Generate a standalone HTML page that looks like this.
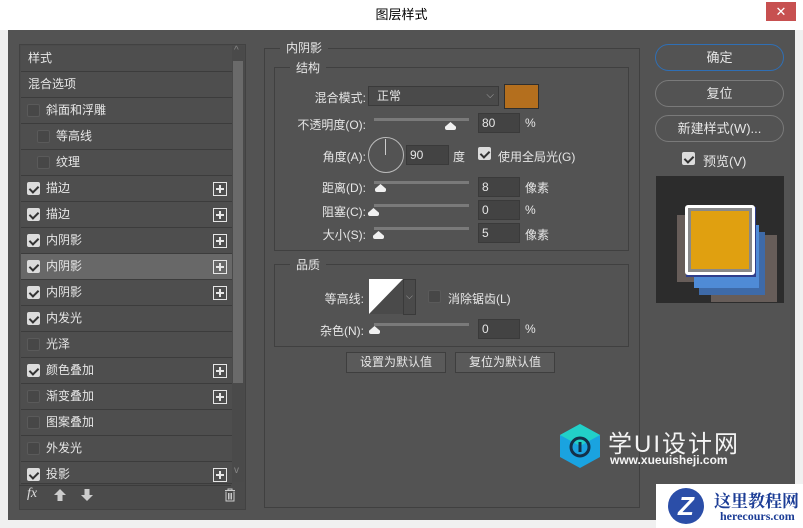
<!DOCTYPE html>
<html><head><meta charset="utf-8"><style>
*{margin:0;padding:0;box-sizing:border-box}
body{width:803px;height:528px;background:#f0f0f0;position:relative;overflow:hidden;font-family:"Liberation Sans","Noto Sans CJK SC",sans-serif;font-size:12px;color:#e6e6e6}
.a{position:absolute}
.title{left:0;top:0;width:803px;height:30px;background:#fff;color:#000;font-size:13px;text-align:center;line-height:30px}
.close{left:766px;top:2px;width:30px;height:19px;background:#c75050;color:#fff;text-align:center;line-height:19px;font-size:13px}
.body{left:8px;top:30px;width:787px;height:490px;background:#535353}
.list{left:19px;top:44px;width:227px;height:466px;border:1px solid #424242;background:#4b4b4b}
.row{position:absolute;left:1px;width:211px;height:26px;border-bottom:1px solid #3c3c3c;background:#4e4e4e;line-height:25px}
.row.sel{background:#686868}
.cb{position:absolute;top:6px;width:13px;height:13px;border:1px solid #5a5a5a;background:#474747;border-radius:2px}
.cb.on{background:#dcdcdc;border-color:#dcdcdc}
.cb.on:after{content:"";position:absolute;left:3px;top:1px;width:4px;height:7px;border:solid #333;border-width:0 2px 2px 0;transform:rotate(45deg)}
.plus{position:absolute;left:192px;top:6px;width:14px;height:14px;border:1px solid #e6e6e6}
.plus:before{content:"";position:absolute;left:2px;top:5px;width:8px;height:2px;background:#e6e6e6}
.plus:after{content:"";position:absolute;left:5px;top:2px;width:2px;height:8px;background:#e6e6e6}
.fs{border:1px solid #404040}
.lg{background:#535353;padding:0 6px}
.inp{position:absolute;height:20px;background:#434343;border:1px solid #3a3a3a;line-height:18px;padding-left:3px}
.sl{position:absolute;height:3px;background:#7a7a7a}
.th{position:absolute;width:11px;height:8px;background:#f0f0f0;clip-path:polygon(50% 0,100% 60%,100% 100%,0 100%,0 60%);border-radius:0 0 2px 2px}
.lbl{position:absolute;text-align:right}
.btn{position:absolute;left:655px;width:129px;height:27px;border:1px solid #7a7a7a;border-radius:14px;text-align:center;line-height:25px;font-size:13px}
.dbtn{position:absolute;top:352px;height:21px;border:1px solid #3e3e3e;background:#5a5a5a;text-align:center;line-height:19px}
</style></head><body>
<div class="a title">图层样式</div>
<div class="a close">✕</div>
<div class="a body"></div>
<div class="a list">
 <div class="row" style="top:1px;padding-left:7px">样式</div>
 <div class="row" style="top:27px;padding-left:7px">混合选项</div>
 <div class="row" style="top:53px"><span class="cb" style="left:6px"></span><span class="a" style="left:25px">斜面和浮雕</span></div>
 <div class="row" style="top:79px"><span class="cb" style="left:16px"></span><span class="a" style="left:35px">等高线</span></div>
 <div class="row" style="top:105px"><span class="cb" style="left:16px"></span><span class="a" style="left:35px">纹理</span></div>
 <div class="row" style="top:131px"><span class="cb on" style="left:6px"></span><span class="a" style="left:25px">描边</span><span class="plus"></span></div>
 <div class="row" style="top:157px"><span class="cb on" style="left:6px"></span><span class="a" style="left:25px">描边</span><span class="plus"></span></div>
 <div class="row" style="top:183px"><span class="cb on" style="left:6px"></span><span class="a" style="left:25px">内阴影</span><span class="plus"></span></div>
 <div class="row sel" style="top:209px"><span class="cb on" style="left:6px"></span><span class="a" style="left:25px">内阴影</span><span class="plus"></span></div>
 <div class="row" style="top:235px"><span class="cb on" style="left:6px"></span><span class="a" style="left:25px">内阴影</span><span class="plus"></span></div>
 <div class="row" style="top:261px"><span class="cb on" style="left:6px"></span><span class="a" style="left:25px">内发光</span></div>
 <div class="row" style="top:287px"><span class="cb" style="left:6px"></span><span class="a" style="left:25px">光泽</span></div>
 <div class="row" style="top:313px"><span class="cb on" style="left:6px"></span><span class="a" style="left:25px">颜色叠加</span><span class="plus"></span></div>
 <div class="row" style="top:339px"><span class="cb" style="left:6px"></span><span class="a" style="left:25px">渐变叠加</span><span class="plus"></span></div>
 <div class="row" style="top:365px"><span class="cb" style="left:6px"></span><span class="a" style="left:25px">图案叠加</span></div>
 <div class="row" style="top:391px"><span class="cb" style="left:6px"></span><span class="a" style="left:25px">外发光</span></div>
 <div class="row" style="top:417px;height:22px"><span class="cb on" style="left:6px"></span><span class="a" style="left:25px">投影</span><span class="plus"></span></div>
 <div class="a" style="left:212px;top:1px;width:12px;height:436px;background:#4a4a4a"></div>
 <div class="a" style="left:213px;top:16px;width:10px;height:322px;background:#6a6a6a"></div>
 <div class="a" style="left:214px;top:0px;color:#888;font-size:10px">^</div>
 <div class="a" style="left:214px;top:420px;color:#888;font-size:10px">v</div>
 <div class="a" style="left:7px;top:441px;font-style:italic;font-size:14px;color:#ddd;font-family:'Liberation Serif',serif">fx</div>
 <svg class="a" style="left:34px;top:444px" width="12" height="12"><polygon points="6,0 12,6 8.5,6 8.5,12 3.5,12 3.5,6 0,6" fill="#ccc"/></svg>
 <svg class="a" style="left:61px;top:444px" width="12" height="12"><polygon points="6,12 12,6 8.5,6 8.5,0 3.5,0 3.5,6 0,6" fill="#ccc"/></svg>
 <svg class="a" style="left:204px;top:443px" width="12" height="14"><path d="M1 2.5H11M4 2.5V1H8V2.5M2 3.5V13H10V3.5M4.5 5V11.5M6 5V11.5M7.5 5V11.5" stroke="#ccc" fill="none" stroke-width="1"/></svg>
</div>
<div class="a" style="left:19px;top:485px;width:212px;height:1px;background:#3c3c3c"></div>

<div class="a fs" style="left:264px;top:48px;width:376px;height:460px"></div>
<div class="a lg" style="left:280px;top:39px">内阴影</div>
<div class="a fs" style="left:274px;top:67px;width:355px;height:184px"></div>
<div class="a lg" style="left:290px;top:59px">结构</div>
<div class="lbl" style="left:280px;top:89px;width:86px">混合模式:</div>
<div class="inp" style="left:368px;top:86px;width:131px;background:#4a4a4a;padding-left:8px">正常<span class="a" style="right:4px;top:0;font-size:10px;color:#aaa">⌵</span></div>
<div class="a" style="left:504px;top:84px;width:35px;height:25px;background:#b46f1e;border:1px solid #2f2f2f"></div>
<div class="lbl" style="left:280px;top:116px;width:86px">不透明度(O):</div>
<div class="sl" style="left:374px;top:118px;width:95px"></div><div class="th" style="left:445px;top:122px"></div>
<div class="inp" style="left:478px;top:113px;width:42px">80</div><div class="a" style="left:525px;top:116px">%</div>
<div class="lbl" style="left:280px;top:148px;width:86px">角度(A):</div>
<div class="a" style="left:368px;top:137px;width:36px;height:36px;border:1px solid #bbb;border-radius:50%"></div>
<div class="a" style="left:385px;top:139px;width:1px;height:16px;background:#ccc"></div>
<div class="inp" style="left:406px;top:145px;width:43px">90</div><div class="a" style="left:453px;top:148px">度</div>
<span class="cb on" style="left:478px;top:147px"></span><div class="a" style="left:498px;top:148px">使用全局光(G)</div>
<div class="lbl" style="left:280px;top:179px;width:86px">距离(D):</div>
<div class="sl" style="left:374px;top:181px;width:95px"></div><div class="th" style="left:375px;top:184px"></div>
<div class="inp" style="left:478px;top:177px;width:42px">8</div><div class="a" style="left:525px;top:179px">像素</div>
<div class="lbl" style="left:280px;top:203px;width:86px">阻塞(C):</div>
<div class="sl" style="left:374px;top:204px;width:95px"></div><div class="th" style="left:368px;top:208px"></div>
<div class="inp" style="left:478px;top:200px;width:42px">0</div><div class="a" style="left:525px;top:203px">%</div>
<div class="lbl" style="left:280px;top:226px;width:86px">大小(S):</div>
<div class="sl" style="left:374px;top:227px;width:95px"></div><div class="th" style="left:373px;top:231px"></div>
<div class="inp" style="left:478px;top:223px;width:42px">5</div><div class="a" style="left:525px;top:226px">像素</div>

<div class="a fs" style="left:274px;top:264px;width:355px;height:83px"></div>
<div class="a lg" style="left:290px;top:256px">品质</div>
<div class="lbl" style="left:280px;top:290px;width:84px">等高线:</div>
<svg class="a" style="left:369px;top:279px" width="47" height="36"><rect x="0" y="0" width="34" height="35" fill="#4a4a4a"/><polygon points="0,0 34,0 0,35" fill="#fff"/><rect x="34.5" y="0.5" width="12" height="35" fill="#4a4a4a" stroke="#3a3a3a"/><text x="37" y="20" font-size="9" fill="#aaa">⌵</text></svg>
<span class="cb" style="left:428px;top:290px"></span><div class="a" style="left:448px;top:290px">消除锯齿(L)</div>
<div class="lbl" style="left:280px;top:322px;width:84px">杂色(N):</div>
<div class="sl" style="left:374px;top:323px;width:95px"></div><div class="th" style="left:369px;top:326px"></div>
<div class="inp" style="left:478px;top:319px;width:42px">0</div><div class="a" style="left:525px;top:322px">%</div>
<div class="dbtn" style="left:346px;width:100px">设置为默认值</div>
<div class="dbtn" style="left:455px;width:100px">复位为默认值</div>

<div class="btn" style="top:44px;border-color:#2f6fb5">确定</div>
<div class="btn" style="top:80px">复位</div>
<div class="btn" style="top:115px">新建样式(W)...</div>
<span class="cb on" style="left:682px;top:152px"></span><div class="a" style="left:703px;top:151px;font-size:13px">预览(V)</div>
<div class="a" style="left:656px;top:176px;width:128px;height:127px;background:#2c2c2c"></div>
<div class="a" style="left:711px;top:235px;width:66px;height:67px;background:#675d59"></div>
<div class="a" style="left:677px;top:215px;width:40px;height:67px;background:#675d59"></div>
<div class="a" style="left:699px;top:232px;width:66px;height:63px;background:#3e6aa8"></div>
<div class="a" style="left:694px;top:225px;width:65px;height:63px;background:#4f8bd6"></div>
<div class="a" style="left:686px;top:207px;width:70px;height:70px;background:#2f3e8a"></div>
<div class="a" style="left:685px;top:205px;width:70px;height:70px;border:3px solid #fff;border-radius:3px;background:#888"></div>
<div class="a" style="left:691px;top:211px;width:58px;height:58px;background:#e0a010"></div>

<svg class="a" style="left:557px;top:422px" width="46" height="48"><polygon points="23,2 43,13 43,35 23,46 3,35 3,13" fill="#1aa3e0"/><polygon points="23,2 43,13 23,24 3,13" fill="#22d0c8"/><circle cx="23" cy="25" r="9" fill="none" stroke="#143048" stroke-width="3"/><rect x="21.5" y="20" width="3" height="10" fill="#143048"/></svg>
<div class="a" style="left:608px;top:424px;font-size:24px;color:#f4f4f4;letter-spacing:2px">学UI设计网</div>
<div class="a" style="left:610px;top:453px;font-size:12px;color:#f4f4f4;font-weight:bold">www.xueuisheji.com</div>

<div class="a" style="left:656px;top:484px;width:147px;height:44px;background:#fff"></div>
<div class="a" style="left:668px;top:488px;width:36px;height:36px;border-radius:50%;background:#2b4ea8;color:#fff;font-size:26px;font-weight:bold;text-align:center;line-height:36px;font-style:italic">Z</div>
<div class="a" style="left:714px;top:487px;font-size:17px;font-weight:bold;color:#1c3d96;font-family:'Liberation Serif','Noto Serif CJK SC',serif">这里教程网</div>
<div class="a" style="left:720px;top:509px;font-size:12px;font-weight:bold;color:#1c3d96;font-family:'Liberation Serif',serif">herecours.com</div>
</body></html>
